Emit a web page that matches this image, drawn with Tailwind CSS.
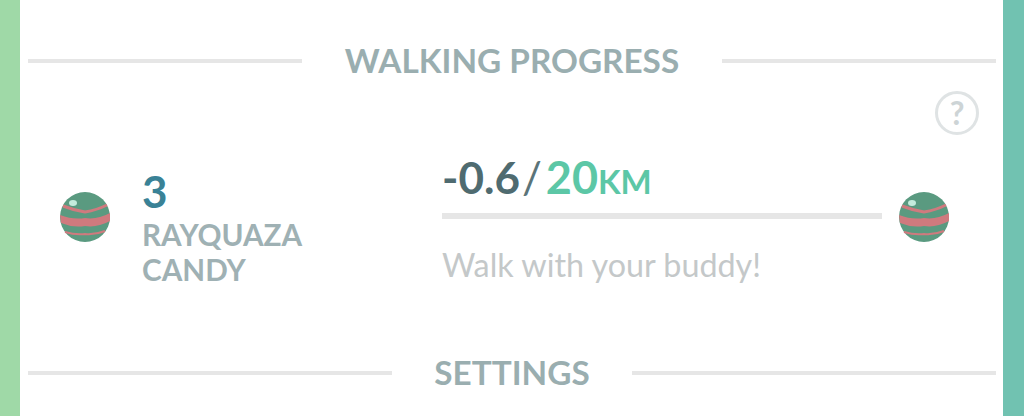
<!DOCTYPE html>
<html lang="en">
    <head>
        <meta charset="UTF-8">
        <meta name="viewport" content="width=device-width, initial-scale=1.0">
        <title>Walking Progress</title>
        <script src="https://cdn.jsdelivr.net/npm/@tailwindcss/browser@4"></script>
    </head>
    <body class="h-[416px] w-[1024px] overflow-hidden flex bg-white font-['Lato',sans-serif]">
        <div class="w-[20px] h-full bg-[#9fd9a7]"></div>
        <main class="w-[983px] h-full bg-white flex flex-col pl-[8px] pr-[7px]">
            <!-- section title -->
            <div class="flex items-center h-[40px] mt-[41px]">
                <div class="w-[274px] h-[4px] bg-[#e6e6e6]"></div>
                <h2 class="flex-1 text-center text-[33.3px] font-bold text-[#9aaeb0] leading-none">WALKING PROGRESS</h2>
                <div class="w-[274px] h-[4px] bg-[#e6e6e6]"></div>
            </div>
            <div class="flex justify-end h-[50px] pr-[17px] mt-[10px]">
                <div class="w-[44px] h-[44px] rounded-full border-[3px] border-[#dfe3e4] flex items-center justify-center text-[32px] font-bold text-[#cdd4d6] leading-none">?</div>
            </div>
            <div class="flex h-[150px] mt-[19px]">
                <div class="w-[31px]"></div>
                <div class="w-[52px] pt-[31px]">
                    <svg class="blur-[0.5px]" width="52" height="52" viewBox="0 0 52 52"><circle cx="26" cy="26" r="25" fill="#5a9a80"/><path d="M4 15 Q14 19 26 21 Q38 19 48 14" fill="none" stroke="#cf7a7e" stroke-width="3"/><path d="M1 24 Q14 29 26 27 Q38 29 51 22 L51 30 Q38 37 26 35 Q14 37 2 32Z" fill="#cf7a7e"/><path d="M6 41 Q16 44 26 43 Q36 44 46 40" fill="none" stroke="#cf7a7e" stroke-width="2"/><ellipse cx="14" cy="12" rx="4" ry="3" fill="#c4ecdc"/></svg>
                </div>
                <div class="w-[331px] pl-[31px] pt-[7px]">
                    <div class="text-[44px] font-bold text-[#3a8296] leading-[48px]">3</div>
                    <div class="text-[29.7px] font-bold text-[#9fb1b4] leading-[35px] mt-[2px]">RAYQUAZA<br>CANDY</div>
                </div>
                <div class="w-[440px]">
                    <div class="flex items-baseline h-[47px] leading-none mt-[-5px]">
                        <span class="text-[44px] font-bold text-[#4f6b70]">-0.6</span>
                        <span class="text-[44px] text-[#5b7479] ml-[2px] mr-[4px]">/</span>
                        <span class="text-[45px] font-bold text-[#5cc7a6]">20</span>
                        <span class="text-[33px] font-bold text-[#5cc7a6]">KM</span>
                    </div>
                    <div class="h-[6px] bg-[#e6e6e6] mt-[11px]"></div>
                    <p class="text-[32.3px] text-[#c4c8c9] leading-none mt-[30px]">Walk with your buddy!</p>
                </div>
                <div class="w-[16px]"></div>
                <div class="w-[52px] pt-[31px]">
                    <svg class="blur-[0.5px]" width="52" height="52" viewBox="0 0 52 52"><circle cx="26" cy="26" r="25" fill="#5a9a80"/><path d="M4 15 Q14 19 26 21 Q38 19 48 14" fill="none" stroke="#cf7a7e" stroke-width="3"/><path d="M1 24 Q14 29 26 27 Q38 29 51 22 L51 30 Q38 37 26 35 Q14 37 2 32Z" fill="#cf7a7e"/><path d="M6 41 Q16 44 26 43 Q36 44 46 40" fill="none" stroke="#cf7a7e" stroke-width="2"/><ellipse cx="14" cy="12" rx="4" ry="3" fill="#c4ecdc"/></svg>
                </div>
            </div>
            <div class="flex items-center h-[40px] mt-[43px]">
                <div class="w-[364px] h-[4px] bg-[#e6e6e6]"></div>
                <h2 class="flex-1 text-center text-[33.3px] font-bold text-[#9aaeb0] leading-none">SETTINGS</h2>
                <div class="w-[364px] h-[4px] bg-[#e6e6e6]"></div>
            </div>
        </main>
        <div class="flex-1 h-full bg-[#71c2b1]"></div>
    </body>
</html>
